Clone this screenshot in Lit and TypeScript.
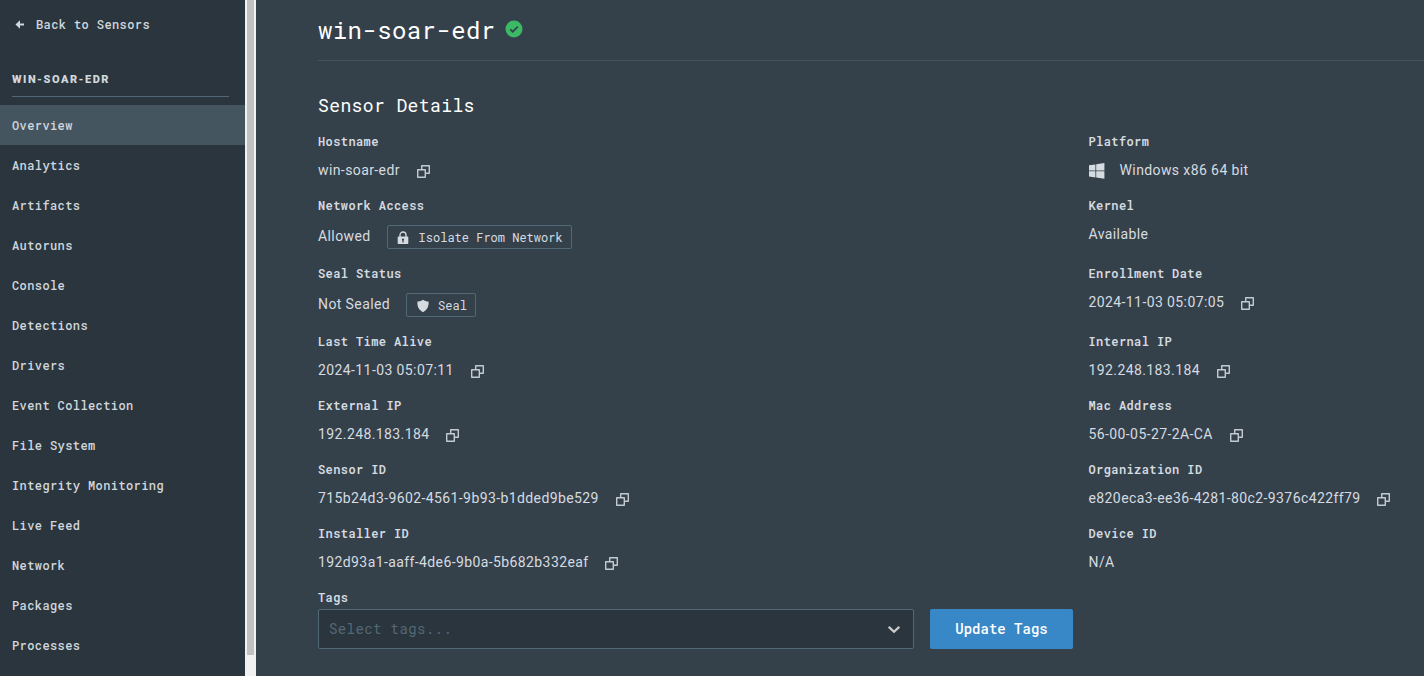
import { LitElement, html, css, nothing } from "lit";
import { customElement, property } from "lit/decorators.js";

const copyIcon = html`<svg class="copy" width="13" height="13" viewBox="0 0 13 13" fill="none" stroke="currentColor" stroke-width="1.4" stroke-linejoin="round">
  <path d="M4.7 4.300V.7h7.600v7.600H8.700" /><rect x=".7" y="4.700" width="7.600" height="7.600" />
</svg>`;

const lockIcon = html`<svg width="12" height="14" viewBox="0 0 12 14">
  <path d="M3 6V4a3 3 0 0 1 6 0v2" fill="none" stroke="currentColor" stroke-width="1.300" />
  <path fill="currentColor" fill-rule="evenodd" d="M1.500 5.500h9a.8.8 0 0 1 .8.8v6a.8.8 0 0 1-.8.8h-9a.8.8 0 0 1-.8-.8v-6a.8.8 0 0 1 .8-.8zM6 7.400a1.200 1.200 0 0 0-.6 2.200v1.800h1.200V9.600A1.200 1.200 0 0 0 6 7.400z" />
</svg>`;

const shieldIcon = html`<svg width="12" height="14" viewBox="0 0 12 14">
  <path fill="currentColor" d="M6 .7c1.600 1.200 3.400 1.800 5.600 1.900.3 5-1.500 8.600-5.600 10.700C1.900 11.200.1 7.600.4 2.600 2.600 2.500 4.400 1.900 6 .7z" />
</svg>`;

const windowsIcon = html`<svg class="windows" width="16" height="16" viewBox="0 0 16 16">
  <path fill="currentColor" d="M0 2.300l6.400-.9v6.100H0zM7.200 1.300L15.400.1v7.400H7.200zM0 8.300h6.400v6.100L0 13.500zM7.200 8.300h8.200v7.400l-8.200-1.200z" />
</svg>`;

@customElement("side-nav")
export class SideNav extends LitElement {
  @property({ type: Array }) items: string[] = [];
  @property() active = "";

  static styles = css`
    :host {
      display: block;
      width: 245px;
      flex: none;
      background: #2b353d;
      color: #d0d7dd;
      font: 500 12px/40px "Roboto Mono", "Liberation Mono", monospace;
      letter-spacing: 0.4px;
    }
    .back {
      display: flex;
      align-items: center;
      gap: 11px;
      height: 48px;
      padding-left: 15px;
    }
    .name {
      height: 49px;
      margin: 0 16px 8px 12px;
      box-sizing: border-box;
      padding-top: 23px;
      border-bottom: 1px solid #526876;
      font: 900 11px/18px Roboto, sans-serif;
      letter-spacing: 1.5px;
    }
    .item { height: 40px; padding-left: 12px; }
    .active { background: #455560; }
  `;

  render() {
    return html`
      <div class="back">
        <svg width="10" height="9" viewBox="0 0 10 9" fill="none" stroke="currentColor" stroke-width="2">
          <path d="M3 4.500h6" /><path d="M5 .3v8.400L.5 4.500z" fill="currentColor" stroke="none" />
        </svg>
        <span>Back to Sensors</span>
      </div>
      <div class="name">WIN-SOAR-EDR</div>
      ${this.items.map((i) => html`<div class="item ${i === this.active ? "active" : ""}">${i}</div>`)}
    `;
  }
}

interface Detail {
  label: string;
  value: string;
  copy?: boolean;
  icon?: unknown;
  action?: { icon: unknown; text: string };
}

@customElement("detail-field")
export class DetailField extends LitElement {
  @property({ attribute: false }) detail!: Detail;

  static styles = css`
    :host { display: block; color: #d5dbe0; }
    .label {
      font: 600 12px/20px "Roboto Mono", "Liberation Mono", monospace;
      letter-spacing: 0.4px;
    }
    .value {
      display: flex;
      align-items: center;
      margin-top: 9px;
      height: 20px;
      font: 14px/20px Roboto, sans-serif;
      letter-spacing: 0.4px;
      white-space: nowrap;
    }
    .action-row { height: 24px; margin-top: 10px; }
    .action-row .text { margin-bottom: 2px; }
    .copy { margin: 2px 0 0 16.8px; color: #c3cad0; }
    .windows { margin: 2px 15px 0 0; }
    .button {
      display: flex;
      align-items: center;
      gap: 9.5px;
      box-sizing: border-box;
      height: 24px;
      margin-left: 16px;
      padding: 0 8px 0 9.5px;
      border: 1px solid #526876;
      border-radius: 2px;
      font: 400 12px/20px "Roboto Mono", "Liberation Mono", monospace;
      letter-spacing: 0;
    }
    .button svg { margin-top: 1px; }
  `;

  render() {
    const d = this.detail;
    return html`
      <div class="label">${d.label}</div>
      <div class="value ${d.action ? "action-row" : ""}">
        ${d.icon ?? nothing}<span class="text">${d.value}</span>${d.copy ? copyIcon : nothing}
        ${d.action ? html`<div class="button">${d.action.icon}<span>${d.action.text}</span></div>` : nothing}
      </div>
    `;
  }
}

@customElement("app-root")
export class AppRoot extends LitElement {
  private nav = ["Overview", "Analytics", "Artifacts", "Autoruns", "Console", "Detections", "Drivers",
    "Event Collection", "File System", "Integrity Monitoring", "Live Feed", "Network", "Packages", "Processes"];

  private details: Detail[] = [
    { label: "Hostname", value: "win-soar-edr", copy: true },
    { label: "Platform", value: "Windows x86 64 bit", icon: windowsIcon },
    { label: "Network Access", value: "Allowed", action: { icon: lockIcon, text: "Isolate From Network" } },
    { label: "Kernel", value: "Available" },
    { label: "Seal Status", value: "Not Sealed", action: { icon: shieldIcon, text: "Seal" } },
    { label: "Enrollment Date", value: "2024-11-03 05:07:05", copy: true },
    { label: "Last Time Alive", value: "2024-11-03 05:07:11", copy: true },
    { label: "Internal IP", value: "192.248.183.184", copy: true },
    { label: "External IP", value: "192.248.183.184", copy: true },
    { label: "Mac Address", value: "56-00-05-27-2A-CA", copy: true },
    { label: "Sensor ID", value: "715b24d3-9602-4561-9b93-b1dded9be529", copy: true },
    { label: "Organization ID", value: "e820eca3-ee36-4281-80c2-9376c422ff79", copy: true },
    { label: "Installer ID", value: "192d93a1-aaff-4de6-9b0a-5b682b332eaf", copy: true },
    { label: "Device ID", value: "N/A" },
  ];

  static styles = css`
    :host {
      display: flex;
      height: 676px;
      overflow: hidden;
      background: #35414a;
      color: #fff;
      font-family: "Roboto Mono", "Liberation Mono", monospace;
      letter-spacing: 0.4px;
    }
    .scroll {
      flex: none;
      width: 11px;
      box-sizing: border-box;
      padding: 0 2px;
      background: #f1f1f1;
    }
    .thumb { height: 655px; background: #c1c1c1; }
    .main { flex: 1; min-width: 0; padding-left: 62px; }
    .head {
      display: flex;
      align-items: center;
      gap: 9px;
      height: 61px;
      box-sizing: border-box;
      border-bottom: 1px solid #455560;
    }
    .title { font-size: 24px; line-height: 32px; }
    .head svg { margin-bottom: 2px; }
    .section { margin-top: 32px; font-size: 18px; line-height: 24px; height: 38px; }
    .grid {
      display: grid;
      grid-template-columns: 770.5px 1fr;
      grid-template-rows: 64px 68px 68px repeat(4, 64px);
    }
    .tags { font-size: 12px; font-weight: 600; line-height: 20px; height: 22px; color: #d5dbe0; }
    .form { display: flex; gap: 16px; height: 40px; }
    .select {
      display: flex;
      align-items: center;
      justify-content: space-between;
      width: 596px;
      box-sizing: border-box;
      padding: 0 13px 0 10px;
      border: 1px solid #526876;
      border-radius: 2px;
      background: #2b353d;
      color: #526876;
      font-size: 14px;
    }
    .select span { margin-bottom: 1px; }
    .select svg { margin-top: 2px; }
    .update {
      display: flex;
      align-items: center;
      justify-content: center;
      width: 143px;
      box-sizing: border-box;
      border-radius: 2px;
      padding-bottom: 1px;
      background: #3888c8;
      font-size: 14px;
      font-weight: 500;
      letter-spacing: 0;
    }
  `;

  render() {
    return html`
      <side-nav .items=${this.nav} active="Overview"></side-nav>
      <div class="scroll"><div class="thumb"></div></div>
      <div class="main">
        <div class="head">
          <span class="title">win-soar-edr</span>
          <svg width="18" height="18" viewBox="0 0 18 18">
            <circle cx="9" cy="9" r="8.500" fill="#3cb964" />
            <path d="M5.300 9.300l2.500 2.400 5-5" fill="none" stroke="#35414a" stroke-width="1.700" />
          </svg>
        </div>
        <div class="section">Sensor Details</div>
        <div class="grid">${this.details.map((d) => html`<detail-field .detail=${d}></detail-field>`)}</div>
        <div class="tags">Tags</div>
        <div class="form">
          <div class="select">
            <span>Select tags...</span>
            <svg width="12" height="8" viewBox="0 0 12 8" fill="none" stroke="#ccc" stroke-width="2.200" stroke-linecap="round">
              <path d="M1.300 1.400l4.700 4.400 4.700-4.400" />
            </svg>
          </div>
          <div class="update">Update Tags</div>
        </div>
      </div>
    `;
  }
}
